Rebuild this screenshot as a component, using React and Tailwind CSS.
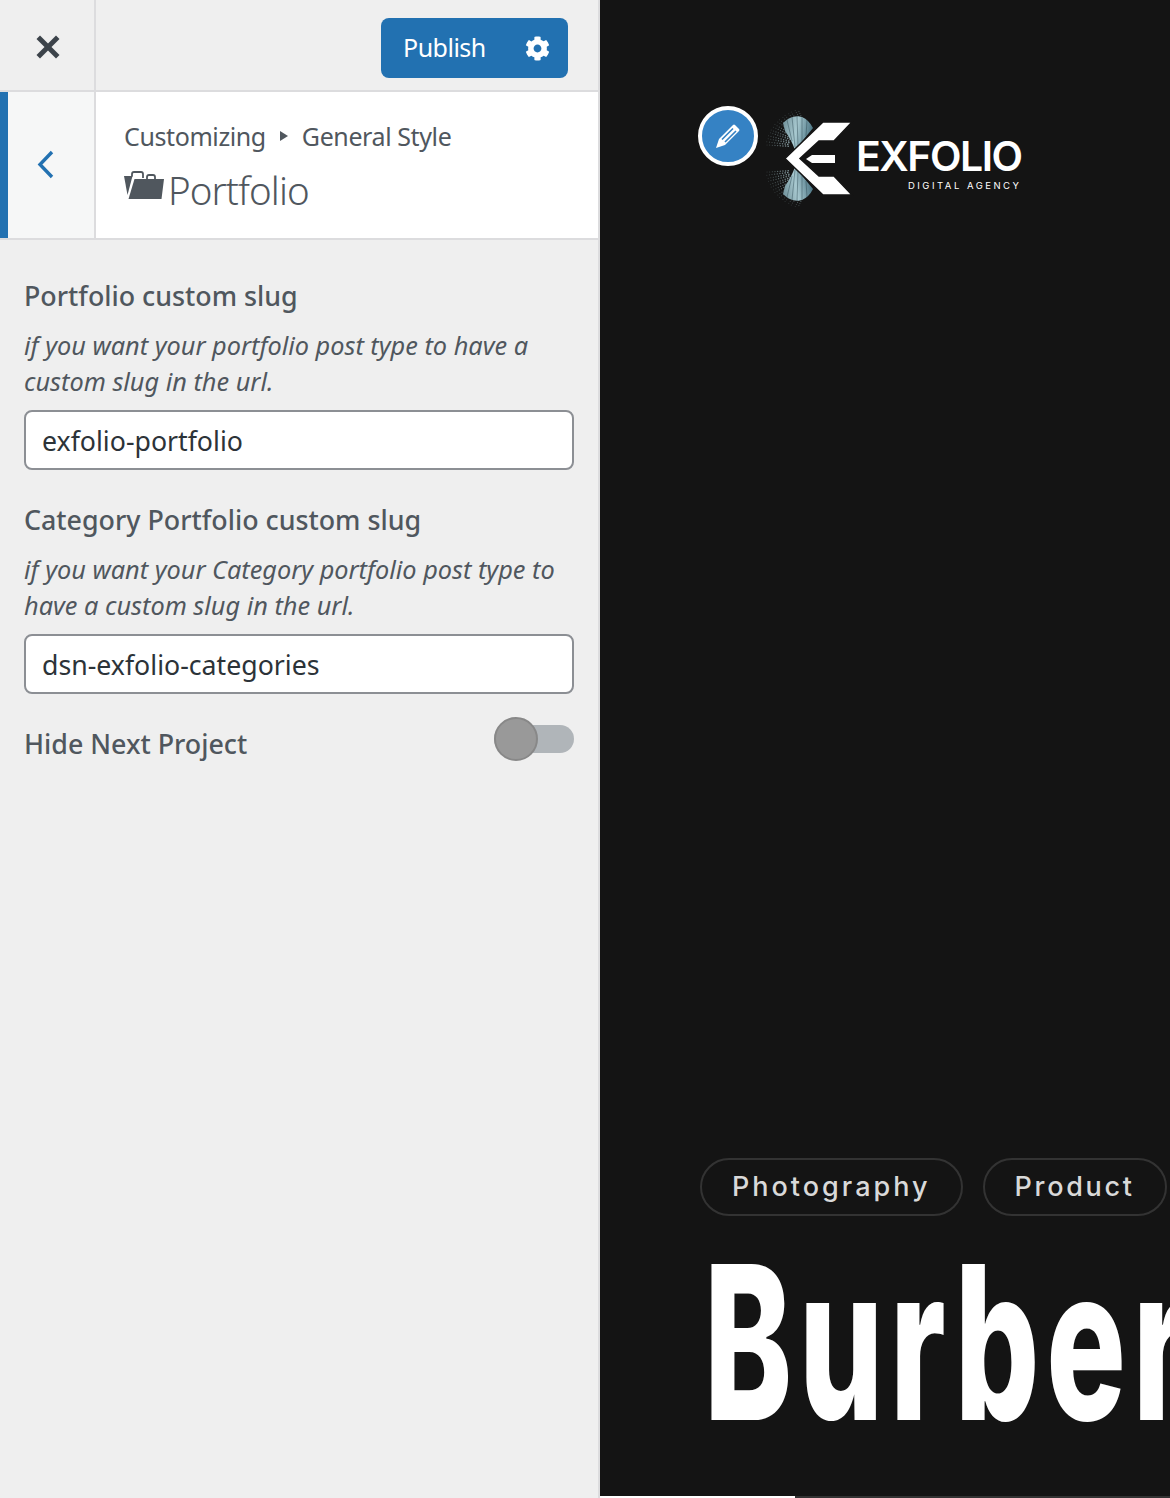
import { FaCog } from 'react-icons/fa';

const sans = { fontFamily: '"Noto Sans", "Open Sans", sans-serif' };

// spray of dots behind the logo mark
const LogoSpray = ({ flip }) => {
  const dots = [];
  for (let a = 0; a < 16; a++) {
    for (let r = 0; r < 9; r++) {
      const angle = -1.2 + a * 0.075;
      const radius = 28 + r * 2.6;
      const y = 38 + Math.sin(angle) * radius * 0.85;
      dots.push(
        <circle
          key={`${a}-${r}`}
          cx={50 - Math.cos(angle) * radius * 1.02 + (a % 2) * 0.7}
          cy={flip ? 97 - y : y}
          r={0.5 + (8 - r) * 0.04}
          fill="#9db6bc"
          opacity={0.25 + (8 - r) * 0.07}
        />
      );
    }
  }
  return <g>{dots}</g>;
};

const Wedge = ({ flip }) => (
  <g transform={flip ? 'matrix(1 0 0 -1 0 97)' : undefined}>
    <path d="M17 13 Q26 4 36 7 Q43 10 47 18 L29 40 Q25 29 19 21 Z" fill="url(#spray)" />
    <path d="M21 10 L26 31 M26 7 L29 37 M31 6 L32 36 M36 7 L36 31 M41 10 L40 26" stroke="#2b4650" strokeWidth="0.8" opacity="0.55" />
  </g>
);

const LogoMark = () => (
  <svg width="90" height="97" viewBox="0 0 90 97" className="shrink-0 mt-[4px]">
    <defs>
      <linearGradient id="spray" x1="0" y1="0" x2="1" y2="0.2">
        <stop offset="0" stopColor="#6d8d96" />
        <stop offset="0.5" stopColor="#a8c9d0" />
        <stop offset="1" stopColor="#4f7886" />
      </linearGradient>
    </defs>
    <LogoSpray />
    <LogoSpray flip />
    <Wedge />
    <Wedge flip />
    <path d="M19 48.5 L57 12 L86 12 L68 31 L53 31 L34 48.5 L53 66 L68 66 L86 85 L57 85 Z" fill="#fff" stroke="#141414" strokeWidth="1.5" />
    <path d="M40 49 L46 45 L69 45 L69 53 L46 53 Z" fill="#fff" />
  </svg>
);

const FolderIcon = () => (
  <svg width="40" height="30" viewBox="0 0 40 30" className="shrink-0 -mt-[9px]">
    <path d="M0 5 H8.5 L3.5 24 Z" fill="#50575e" />
    <path d="M8 5.5 V3 Q8 1 10 1 H17 Q19 1 19 3 V7" fill="none" stroke="#50575e" strokeWidth="1.8" />
    <path d="M23 8 V6 Q23 4 25 4 H29 Q31 4 31 6 V8" fill="none" stroke="#50575e" strokeWidth="1.8" />
    <path d="M10.5 8 H40 L37.5 28 H4.5 Z" fill="#50575e" />
  </svg>
);

const Field = ({ label, help, value }) => (
  <div>
    <h3 className="text-[26.8px] leading-[36px] font-medium text-[#50575e]">{label}</h3>
    <p className="mt-[13px] text-[25.3px] leading-[36px] italic text-[#50575e]">{help}</p>
    <input
      readOnly
      value={value}
      style={sans}
      className="mt-[11px] block w-full h-[60px] rounded-lg border-2 border-[#8c8f94] bg-white px-[16px] text-[26.7px] text-[#2c3338] outline-none"
    />
  </div>
);

const Sidebar = () => (
  <aside style={sans} className="w-[600px] shrink-0 flex flex-col bg-[#efefef] border-r-2 border-[#dcdcde]">
    <div className="h-[92px] flex border-b-2 border-[#dcdcde]">
      <div className="w-[96px] flex items-center justify-center border-r-2 border-[#dcdcde]">
        <svg width="24" height="24" viewBox="0 0 24 24" className="mt-[4px] ml-[1px]">
          <path d="M4 0.5 L12 8.5 L20 0.5 L23.5 4 L15.5 12 L23.5 20 L20 23.5 L12 15.5 L4 23.5 L0.5 20 L8.5 12 L0.5 4 Z" fill="#3c434a" />
        </svg>
      </div>
      <div className="flex-1 flex items-start justify-end pt-[18px] pr-[30px]">
        <button className="w-[187px] h-[60px] rounded-lg bg-[#2271b1] flex items-center justify-between pl-[22px] pr-[18px] text-white text-[25px] tracking-[-0.5px]">
          <span>Publish</span>
          <FaCog size={25} />
        </button>
      </div>
    </div>

    <div className="h-[148px] flex bg-white border-b-2 border-[#dcdcde]">
      <div className="w-[96px] flex items-center justify-center bg-[#f6f7f7] border-l-[8px] border-l-[#2271b1] border-r-2 border-r-[#dcdcde]">
        <svg width="20" height="32" viewBox="0 0 20 32" className="-mt-[1px] -ml-[10px]">
          <path d="M16 3 L4 15.5 L16 28" fill="none" stroke="#2271b1" strokeWidth="3.4" />
        </svg>
      </div>
      <div className="pl-[28px] pt-[26px]">
        <div className="flex items-center text-[25px] leading-[36px] text-[#50575e] tracking-[-0.4px]">
          <span>Customizing</span>
          <span className="mx-[14px] w-0 h-0 border-y-[5px] border-y-transparent border-l-[8px] border-l-[#50575e]" />
          <span>General Style</span>
        </div>
        <div className="flex items-center mt-[12px]">
          <FolderIcon />
          <span className="ml-[4px] text-[38.5px] leading-[48px] font-light text-[#50575e] tracking-[-0.9px]">Portfolio</span>
        </div>
      </div>
    </div>

    <div className="px-[24px] pt-[38px]">
      <div className="flex flex-col gap-[32px]">
        <Field
          label="Portfolio custom slug"
          help="if you want your portfolio post type to have a custom slug in the url."
          value="exfolio-portfolio"
        />
        <Field
          label="Category Portfolio custom slug"
          help="if you want your Category portfolio post type to have a custom slug in the url."
          value="dsn-exfolio-categories"
        />
      </div>
      <div className="mt-[24px] flex items-start justify-between">
        <span className="text-[26.8px] leading-[36px] font-medium text-[#50575e] mt-[8px]">Hide Next Project</span>
        <div className="relative w-[80px] h-[28px] mt-[7px] rounded-full bg-[#b0b5b9]">
          <span className="absolute left-0 -top-[8px] w-[44px] h-[44px] rounded-full bg-[#999] border-2 border-[#888]" />
        </div>
      </div>
    </div>
  </aside>
);

const Preview = () => (
  <main className="relative flex-1 min-w-0 overflow-hidden bg-[#141414] pl-[98px] pt-[106px] flex flex-col">
    <div className="flex items-start">
      <span className="w-[60px] h-[60px] shrink-0 rounded-full bg-[#3582c4] border-4 border-white flex items-center justify-center">
        <svg width="30" height="30" viewBox="0 0 30 30">
          <path d="M3 27 L6 18 L20 4 Q21 3 22 4 L26 8 Q27 9 26 10 L12 24 Z" fill="#fff" />
          <path d="M9 18.5 L20 7.5 M12 21 L23 10" stroke="#3582c4" strokeWidth="1.6" />
        </svg>
      </span>
      <div className="ml-[8px] flex items-start">
        <LogoMark />
        <div className="flex flex-col items-end pt-[25px] text-white" style={{ fontFamily: 'Inter, sans-serif' }}>
          <span className="text-[41px] leading-[50px] font-semibold tracking-[-1.5px]">EXFOLIO</span>
          <span className="-mt-[1px] text-[9.5px] leading-[12px] tracking-[2.5px]">DIGITAL AGENCY</span>
        </div>
      </div>
    </div>

    <div className="mt-auto">
      <div className="flex gap-[20px] ml-[2px]" style={{ fontFamily: 'Inter, sans-serif' }}>
        <span className="h-[58px] px-[30px] shrink-0 flex items-center rounded-full border-2 border-[#333] text-[#d9d9d9] text-[27px] font-medium tracking-[3px]">Photography</span>
        <span className="h-[58px] px-[30px] shrink-0 flex items-center rounded-full border-2 border-[#333] text-[#d9d9d9] text-[27px] font-medium tracking-[2.7px]">Product</span>
      </div>
      <div
        style={{ fontFamily: 'Inter, sans-serif' }}
        className="mt-[32px] mb-[60px] ml-[6px] h-[190px] whitespace-nowrap text-white text-[214px] leading-[190px] font-extrabold origin-left scale-x-[0.62] tracking-[11px]"
      >
        Burberry
      </div>
    </div>

    <div className="absolute left-0 right-0 bottom-0 h-[2px] bg-[#333] flex">
      <span className="w-[195px] bg-white" />
    </div>
  </main>
);

export default function App() {
  return (
    <div className="w-[1170px] h-[1498px] flex overflow-hidden">
      <Sidebar />
      <Preview />
    </div>
  );
}
